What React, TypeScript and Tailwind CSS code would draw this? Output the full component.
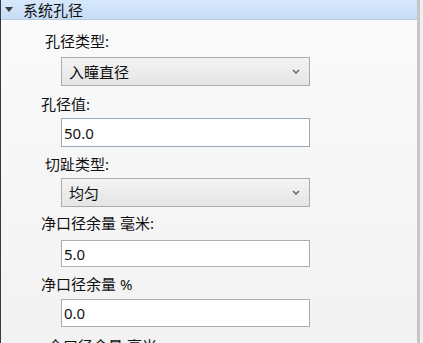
import React from "react";

const font = '"Noto Sans", "Noto Sans CJK SC", sans-serif';

function Chevron() {
  return (
    <svg width="8" height="5" viewBox="0 0 8 5" className="mr-[9px]">
      <polyline points="1,1 4,4 7,1" fill="none" stroke="#5a5a5a" strokeWidth="1.3" />
    </svg>
  );
}

function Combo({ text, mt }: { text: string; mt: string }) {
  return (
    <div
      className={`${mt} ml-[60px] w-[249px] h-[29px] flex items-center justify-between border border-[#acacac] bg-gradient-to-b from-[#f3f3f3] to-[#e5e5e5] text-[15px] text-[#111]`}
    >
      <span className="pl-[7px] leading-[20px]">{text}</span>
      <Chevron />
    </div>
  );
}

function Input({ text, mt, h, border }: { text: string; mt: string; h: string; border: string }) {
  return (
    <div
      className={`${mt} ${h} ${border} ml-[60px] w-[249px] flex items-center border bg-white text-[15px] text-[#111]`}
    >
      <span className="pl-[2px] leading-[20px]">{text}</span>
    </div>
  );
}

export default function App() {
  return (
    <div
      className="w-[423px] h-[343px] overflow-hidden flex bg-white"
      style={{ fontFamily: font }}
    >
      <div className="w-[1px] h-full bg-[#3a3a3a]" />
      <div className="flex-1 flex flex-col">
        <div className="h-[3px] bg-white" />
        <div className="h-[1px] bg-[#a3a3a3]" />
        <div className="h-[1px] bg-[#e9eef3]" />
        <div className="h-[20px] flex items-center bg-gradient-to-b from-[#d7e8fb] to-[#c6ddf7] border-b border-[#b4c8de]">
          <svg width="8" height="5" viewBox="0 0 8 5" className="ml-[4px]">
            <polygon points="0,0 8,0 4,5" fill="#3c3c3c" />
          </svg>
          <span className="ml-[10px] text-[15px] leading-[20px] text-[#111]">系统孔径</span>
        </div>
        <div className="flex-1 bg-gradient-to-b from-[#fafafa] to-[#f2f2f3] text-[15px] text-[#111]">
          <div className="mt-[11px] ml-[44px] h-[20px] leading-[20px]">孔径类型:</div>
          <Combo text="入瞳直径" mt="mt-[6px]" />
          <div className="mt-[8px] ml-[40px] h-[20px] leading-[20px]">孔径值:</div>
          <Input text="50.0" mt="mt-[4px]" h="h-[29px]" border="border-[#98a8bd]" />
          <div className="mt-[7px] ml-[44px] h-[20px] leading-[20px]">切趾类型:</div>
          <Combo text="均匀" mt="mt-[4px]" />
          <div className="mt-[6px] ml-[40px] h-[20px] leading-[20px]">净口径余量 毫米:</div>
          <Input text="5.0" mt="mt-[7px]" h="h-[27px]" border="border-[#abadb3]" />
          <div className="mt-[7px] ml-[40px] h-[20px] leading-[20px]">净口径余量 %</div>
          <Input text="0.0" mt="mt-[5px]" h="h-[28px]" border="border-[#abadb3]" />
          <div className="mt-[9px] ml-[47px] h-[20px] leading-[20px]">全口径余量 毫米:</div>
        </div>
      </div>
      <div className="w-[3px] h-full bg-[#c6c6c6]" />
      <div className="w-[3px] h-full bg-[#efefef]" />
    </div>
  );
}
